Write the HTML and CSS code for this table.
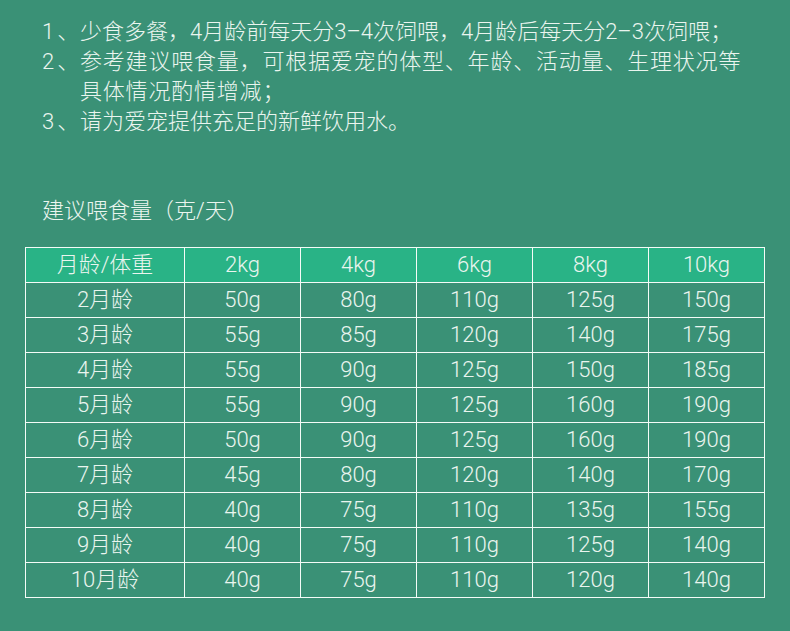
FILE: index.html
```html
<!DOCTYPE html>
<html lang="zh">
<head>
<meta charset="utf-8">
<link rel="stylesheet" href="styles.css">
</head>
<body>
<div class="page">
  <ol class="tips">
    <li><span class="num">1<span class="dun">、</span></span><span class="txt">少食多餐，4月龄前每天分3–4次饲喂，4月龄后每天分2–3次饲喂；</span></li>
    <li><span class="num">2<span class="dun">、</span></span><span class="txt wide">参考建议喂食量，可根据爱宠的体型、年龄、活动量、生理状况等<br>具体情况酌情增减；</span></li>
    <li><span class="num">3<span class="dun">、</span></span><span class="txt">请为爱宠提供充足的新鲜饮用水。</span></li>
  </ol>
  <h2 class="title">建议喂食量（克/天）</h2>
  <table class="feed">
    <thead>
      <tr><th>月龄/体重</th><th>2kg</th><th>4kg</th><th>6kg</th><th>8kg</th><th>10kg</th></tr>
    </thead>
    <tbody>
      <tr><td>2月龄</td><td>50g</td><td>80g</td><td>110g</td><td>125g</td><td>150g</td></tr>
      <tr><td>3月龄</td><td>55g</td><td>85g</td><td>120g</td><td>140g</td><td>175g</td></tr>
      <tr><td>4月龄</td><td>55g</td><td>90g</td><td>125g</td><td>150g</td><td>185g</td></tr>
      <tr><td>5月龄</td><td>55g</td><td>90g</td><td>125g</td><td>160g</td><td>190g</td></tr>
      <tr><td>6月龄</td><td>50g</td><td>90g</td><td>125g</td><td>160g</td><td>190g</td></tr>
      <tr><td>7月龄</td><td>45g</td><td>80g</td><td>120g</td><td>140g</td><td>170g</td></tr>
      <tr><td>8月龄</td><td>40g</td><td>75g</td><td>110g</td><td>135g</td><td>155g</td></tr>
      <tr><td>9月龄</td><td>40g</td><td>75g</td><td>110g</td><td>125g</td><td>140g</td></tr>
      <tr><td>10月龄</td><td>40g</td><td>75g</td><td>110g</td><td>120g</td><td>140g</td></tr>
    </tbody>
  </table>
</div>
</body>
</html>
```

FILE: styles.css
```css
html, body {
  margin: 0;
  padding: 0;
  background: #3a9176;
}
.page {
  width: 790px;
  height: 631px;
  box-sizing: border-box;
  padding: 17px 25px 0 25px;
  color: #eaf5ef;
  font-family: "Roboto", "Noto Sans CJK SC", sans-serif;
  font-weight: 300;
}
.tips {
  list-style: none;
  margin: 0;
  padding: 0 0 0 17px;
  font-size: 22px;
  line-height: 30px;
}
.tips li {
  display: flex;
}
.num {
  flex: 0 0 38px;
  white-space: nowrap;
}
.dun {
  padding-left: 3px;
}
.txt {
  width: 700px;
}
.wide {
  letter-spacing: 0.8px;
}
.title {
  margin: 59px 0 0 17px;
  font-size: 22px;
  font-weight: 300;
  line-height: 30px;
}
.feed {
  margin-top: 21px;
  border-collapse: collapse;
  width: 740px;
  table-layout: fixed;
  font-size: 22px;
}
.feed th, .feed td {
  border: 1.5px solid #f4fbf7;
  height: 34px;
  padding: 0;
  text-align: center;
  font-weight: 300;
  line-height: 34px;
}
.feed th:first-child, .feed td:first-child {
  width: 158px;
}
.feed thead tr {
  background: #29b386;
}
```
